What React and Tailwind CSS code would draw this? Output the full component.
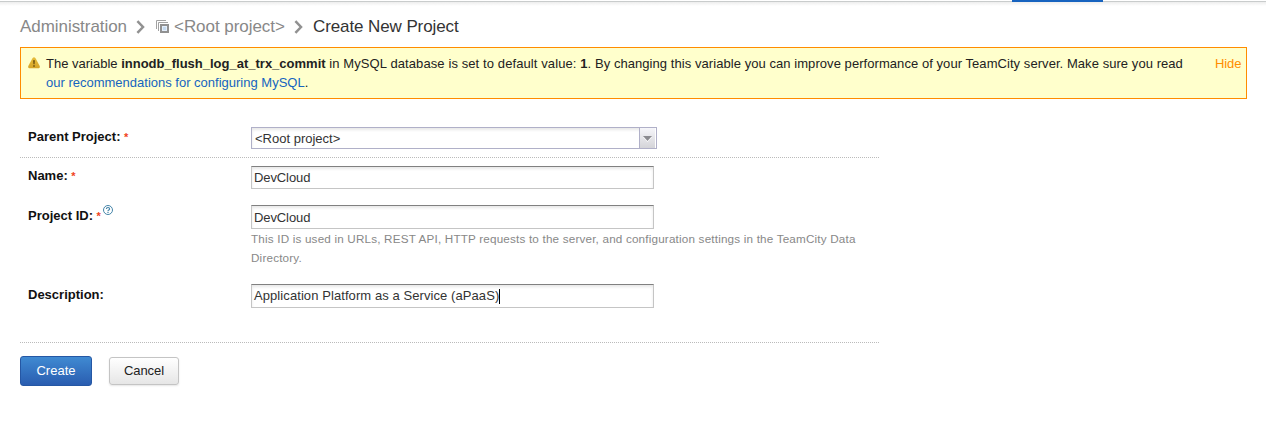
import React from 'react';

function Chevron() {
  return (
    <svg className="block shrink-0" width="9" height="14" viewBox="0 0 9 14" fill="none" stroke="#919191" strokeWidth="2.5">
      <path d="M1.4 1.2 7 7 1.4 12.8" />
    </svg>
  );
}

function ProjectIcon() {
  return (
    <svg className="block shrink-0" width="13" height="13" viewBox="0 0 13 13" fill="none">
      <path d="M.5 9V.5H10M2.5 11V2.5H12" stroke="#a2a2a2" />
      <rect x="5" y="5" width="7" height="7" fill="#e4eefa" stroke="#919191" strokeWidth="2" />
      <rect x="7" y="7" width="3" height="3" fill="#c5daef" />
    </svg>
  );
}

function WarningIcon() {
  return (
    <svg className="block shrink-0" width="12" height="12" viewBox="0 0 12 12">
      <defs>
        <linearGradient id="warn" x1="0" y1="0" x2="0" y2="1">
          <stop offset="0" stopColor="#e6bd3c" />
          <stop offset="1" stopColor="#d6a526" />
        </linearGradient>
      </defs>
      <path d="M4.6 1.1Q6-.7 7.4 1.1L11.7 9Q12.3 11.1 10.8 11.2H1.2Q-.3 11.1.3 9Z" fill="url(#warn)" />
      <path d="M5.2 3.2h1.6L6.5 7.2h-1ZM5.3 8.2h1.4v1.5H5.3Z" fill="#5d4308" />
    </svg>
  );
}

function HelpIcon() {
  return (
    <svg className="-mt-px ml-px block shrink-0" width="10" height="10" viewBox="0 0 10 10" fill="none" stroke="#4484a8">
      <circle cx="5" cy="5" r="4.5" />
      <path d="M3.4 4Q3.4 2.5 5 2.5T6.6 3.9C6.6 4.9 5 4.9 5 6M5 6.8V8" strokeWidth="1.2" />
    </svg>
  );
}

function Field({ value, className, textClass, caret }) {
  return (
    <div className={`flex w-[403px] items-center border border-[#c5c5c5] border-t-[#808080] bg-white pl-[2px] text-[#333] shadow-[inset_0_2px_3px_#e8e8e8] ${className}`}>
      <span className={textClass}>{value}</span>
      {caret && <span className="h-[15px] w-px bg-black" />}
    </div>
  );
}

function Row({ label, required, help, labelClass = 'pt-px', className, children }) {
  return (
    <div className={`flex pl-2 ${className}`}>
      <div className={`flex w-[223px] shrink-0 font-bold leading-[19px] text-[#111] ${labelClass}`}>
        <span>{label}</span>
        {required && <span className="ml-[3.5px] w-[5px] pt-px text-[11px] text-[#f0421c]">*</span>}
        {help && <HelpIcon />}
      </div>
      <div>{children}</div>
    </div>
  );
}

export default function App() {
  return (
    <div className="h-[445px] w-[1266px] overflow-hidden bg-white font-['Liberation_Sans',Arial,sans-serif] text-[13px] text-[#222]">
      <div className="relative h-[6px] bg-linear-to-b from-[#e4e4e4] to-white">
        <div className="h-px bg-white" />
        <div className="h-px bg-[#c9cccc]" />
        <div className="absolute top-0 left-[1012px] h-[2px] w-[91px] bg-[#1763bf]" />
      </div>

      <nav className="flex h-[41px] items-center pl-5 text-[17px] leading-[20px] tracking-[-0.05px] text-[#888]">
        <span className="w-[116px]">Administration</span>
        <Chevron />
        <span className="w-[11px]" />
        <ProjectIcon />
        <span className="ml-[5px] w-[120px]">&lt;Root project&gt;</span>
        <Chevron />
        <span className="ml-[10px] tracking-[-0.1px] text-[#333]">Create New Project</span>
      </nav>

      <div className="ml-5 flex h-[52px] w-[1227px] border border-[#ff8c00] bg-[#ffffcc] pt-[6px] pl-[7px] leading-[19px]">
        <div className="pt-[3px]"><WarningIcon /></div>
        <div className="ml-[6px] w-[1169px] whitespace-nowrap">
          <div>
            The variable <b>innodb_flush_log_at_trx_commit</b>
            <span className="tracking-[0.1px]"> in MySQL database is set to default value: <b>1</b></span>
            <span className="tracking-[0.06px]">. By changing this variable you can improve performance of your TeamCity server. Make sure you read</span>
          </div>
          <div><a className="text-[#1564c0]">our recommendations for configuring MySQL</a>.</div>
        </div>
        <a className="tracking-[-0.1px] text-[#ff8c00]">Hide</a>
      </div>

      <form className="ml-5 w-[859px] pt-[28px]">
        <Row label="Parent Project:" required labelClass="pt-0" className="h-[30px]">
          <div className="flex h-[22px] w-[406px] border border-[#b0b0c8] bg-white shadow-[inset_0_2px_3px_#e8e8e8]">
            <span className="flex-1 pl-[3px] leading-[22px] text-[#333]">&lt;Root project&gt;</span>
            <span className="flex w-[17px] border-r border-l border-r-white border-l-[#b0b0c8] bg-linear-to-b from-[#f6f6fa] to-[#d4d4d8] pt-[8px] pl-[3px]">
              <svg className="block" width="9" height="6" viewBox="0 0 9 6">
                <path d="M0 1h9L4.5 6Z" fill="#fff" />
                <path d="M0 0h9L4.5 5Z" fill="#8b8b90" />
              </svg>
            </span>
          </div>
        </Row>
        <div className="h-px bg-[repeating-linear-gradient(90deg,#bbb_0_1px,#fff_1px_2px)]" />
        <Row label="Name:" required labelClass="pt-0" className="mt-2 h-[39px]">
          <Field value="DevCloud" className="h-[23px]" textClass="tracking-[-0.1px]" />
        </Row>
        <Row label="Project ID:" required help className="h-[79px]">
          <Field value="DevCloud" className="h-[24px] pt-[2px]" textClass="tracking-[-0.1px]" />
          <div className="whitespace-nowrap text-[11.7px] leading-[19px] tracking-[0.18px] text-[#888]">
            This ID is used in URLs, REST API, HTTP requests to the server, and configuration settings in the TeamCity Data<br />Directory.
          </div>
        </Row>
        <Row label="Description:" className="h-[58px]">
          <Field value="Application Platform as a Service (aPaaS)" className="h-[24px]" textClass="tracking-[0.08px]" caret />
        </Row>
        <div className="h-px bg-[repeating-linear-gradient(90deg,#bbb_0_1px,#fff_1px_2px)]" />
        <div className="flex items-center gap-[17px] pt-[13px]">
          <button type="button" className="h-[30px] w-[72px] rounded-[3px] border border-[#2557a4] bg-linear-to-b from-[#408ad2] to-[#2a5db0] text-white">Create</button>
          <button type="button" className="h-[28px] w-[70px] rounded-[3px] border border-[#c4c4c4] bg-linear-to-b from-white to-[#e6e6e6] tracking-[-0.1px] shadow-[0_1px_2px_#e6e6e6]">Cancel</button>
        </div>
      </form>
    </div>
  );
}
